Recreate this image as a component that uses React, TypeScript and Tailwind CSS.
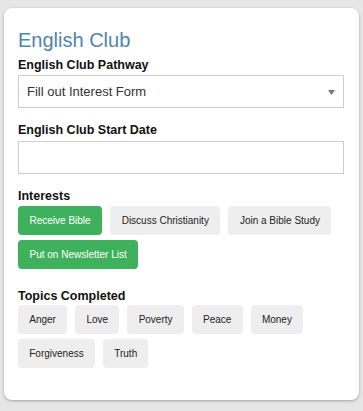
import React from "react";

const interests = [
  { label: "Receive Bible", on: true },
  { label: "Discuss Christianity", on: false },
  { label: "Join a Bible Study", on: false },
  { label: "Put on Newsletter List", on: true },
];

const topics = ["Anger", "Love", "Poverty", "Peace", "Money", "Forgiveness", "Truth"];

function Chip({ label, on, pad }: { label: string; on: boolean; pad: string }) {
  return (
    <button
      className={
        "h-[29px] mr-[8px] mb-[5px] rounded-[4px] text-[10px] leading-[29px] " +
        pad +
        " " +
        (on ? "bg-[#3fb15d] text-white" : "bg-[#eeeeee] text-[#222]")
      }
    >
      {label}
    </button>
  );
}

export default function App() {
  return (
    <div
      className="min-h-[411px] bg-[#e6e6e6] pt-[8px] pl-[4px] pr-[4px] pb-[11px]"
      style={{ fontFamily: '"Liberation Sans", Arial, sans-serif' }}
    >
      <div className="w-[355px] h-[392px] bg-white rounded-[8px] shadow-[0_1px_3px_rgba(0,0,0,0.3)] pt-[20px] pl-[14px] pr-[15px]">
        <h1 className="text-[20px] leading-[24px] text-[#4f84ad] mb-[6px]">English Club</h1>

        <label className="block text-[12.5px] leading-[15px] font-bold text-[#111] mb-[2px]">
          English Club Pathway
        </label>
        <div className="relative h-[33px] border border-[#cccccc] flex items-center pl-[8px]">
          <span className="text-[13px] text-[#333]">Fill out Interest Form</span>
          <svg className="absolute right-[8px] top-[14px]" width="7" height="5" viewBox="0 0 7 5">
            <path d="M0 0 L7 0 L3.5 5 Z" fill="#777" />
          </svg>
        </div>

        <label className="block text-[12.5px] leading-[15px] font-bold text-[#111] mt-[15px] mb-[3px]">
          English Club Start Date
        </label>
        <div className="h-[33px] border border-[#cccccc]" />

        <label className="block text-[12.5px] leading-[15px] font-bold text-[#111] mt-[15px] mb-[2px]">
          Interests
        </label>
        <div className="flex flex-wrap">
          {interests.map((c) => (
            <Chip key={c.label} label={c.label} on={c.on} pad="px-[11.5px]" />
          ))}
        </div>

        <label className="block text-[12.5px] leading-[15px] font-bold text-[#111] mt-[15px] mb-[1px]">
          Topics Completed
        </label>
        <div className="flex flex-wrap">
          {topics.map((t) => (
            <Chip key={t} label={t} on={false} pad="px-[11.25px]" />
          ))}
        </div>
      </div>
    </div>
  );
}
